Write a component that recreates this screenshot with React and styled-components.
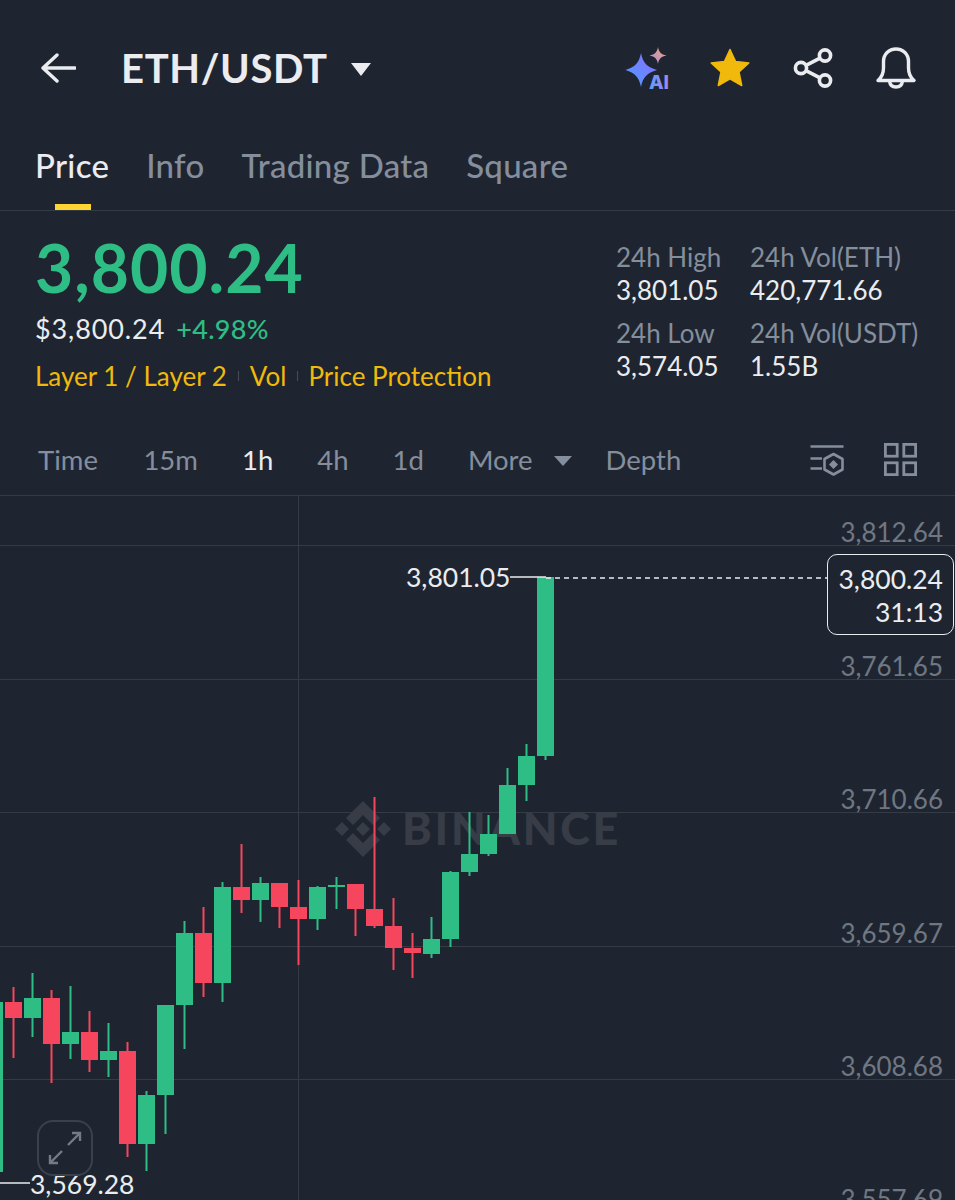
import React from "react";
import styled, { createGlobalStyle } from "styled-components";

const FONT = `Lato, "Open Sans", "Liberation Sans", sans-serif`;

const GlobalStyle = createGlobalStyle`
  html, body {
    margin: 0;
    padding: 0;
    background: #1f2530;
  }
  * {
    box-sizing: border-box;
  }
`;

// page coords: [centre x, wick top, wick bottom, body top, body bottom, up?]
const CANDLES = [
  [-5.5, 1001, 1172, 1002, 1172, 1],
  [13.5, 987, 1058, 1002, 1018, 0],
  [32.5, 973, 1037, 998, 1018, 1],
  [51.5, 990, 1083, 998, 1044, 0],
  [70.5, 986, 1059, 1032, 1044, 1],
  [89.5, 1011, 1072, 1032, 1060, 0],
  [108.5, 1023, 1077, 1051, 1060, 1],
  [127.5, 1042, 1157, 1051, 1144, 0],
  [146.5, 1091, 1171, 1095, 1144, 1],
  [165.5, 1005, 1134, 1005, 1095, 1],
  [184.5, 921, 1049, 933, 1005, 1],
  [203.5, 907, 997, 933, 983, 0],
  [222.5, 882, 1002, 887, 983, 1],
  [241.5, 844, 913, 887, 900, 0],
  [260.5, 877, 922, 883, 900, 1],
  [279.5, 883, 928, 883, 907, 0],
  [298.5, 880, 965, 907, 919, 0],
  [317.5, 886, 930, 887, 919, 1],
  [336.5, 877, 909, 885, 887, 1],
  [355.5, 884, 936, 884, 909, 0],
  [374.5, 797, 928, 909, 926, 0],
  [393.5, 898, 970, 926, 948, 0],
  [412.5, 933, 978, 948, 953, 0],
  [431.5, 917, 958, 939, 954, 1],
  [450.5, 871, 947, 872, 939, 1],
  [469.5, 812, 876, 854, 872, 1],
  [488.5, 815, 856, 834, 854, 1],
  [507.5, 768, 834, 785, 834, 1],
  [526.5, 744, 801, 756, 785, 1],
  [545.5, 577, 760, 577, 756, 1],
];

const GRID_Y = [545, 679, 812, 946, 1079];
const AXIS = [
  ["3,812.64", 532],
  ["3,761.65", 666],
  ["3,710.66", 799],
  ["3,659.67", 933],
  ["3,608.68", 1066],
  ["3,557.69", 1199],
];
const CHART_TOP = 496;

const Page = styled.div`
  width: 955px;
  height: 1200px;
  overflow: hidden;
  display: flex;
  flex-direction: column;
  background: #1f2530;
  color: #eaecef;
  font-family: ${FONT};
`;

const TopBar = styled.header`
  height: 136px;
  flex: none;
  display: flex;
  align-items: center;
  padding: 0 39px 0 40px;
`;

const IconSlot = styled.span`
  display: flex;
  flex: none;
`;

const Pair = styled.h1`
  margin: 0 0 0 45px;
  font-size: 40px;
  font-weight: 700;
  line-height: 1;
  letter-spacing: 0.65px;
  color: #eaecef;
`;

const PairCaret = styled.span`
  margin-left: 23px;
  margin-top: 2px;
  width: 0;
  height: 0;
  border-left: 10.5px solid transparent;
  border-right: 10.5px solid transparent;
  border-top: 13px solid #eaecef;
`;

const TopActions = styled.div`
  margin-left: auto;
  display: flex;
  align-items: center;
  gap: 43px;
`;

const AiSlot = styled.span`
  display: flex;
  margin-right: -6px;
`;

const Tabs = styled.nav`
  height: 75px;
  flex: none;
  display: flex;
  gap: 37px;
  padding: 0 35px;
  border-bottom: 1px solid #353b45;
`;

const Tab = styled.div`
  position: relative;
  height: 58px;
  font-size: 33px;
  line-height: 58px;
  font-weight: 500;
  letter-spacing: 0.28px;
  color: ${(p) => (p.$active ? "#eaecef" : "#848e9c")};

  ${(p) =>
    p.$active &&
    `&::after {
      content: "";
      position: absolute;
      left: 20px;
      top: 68px;
      width: 36px;
      height: 6px;
      background: #fcd535;
    }`}
`;

const Summary = styled.section`
  height: 209px;
  flex: none;
  display: flex;
  justify-content: space-between;
  padding: 0 36px 0 35px;
`;

const PriceBlock = styled.div`
  display: flex;
  flex-direction: column;
`;

const LastPrice = styled.div`
  margin-top: 20px;
  font-size: 66px;
  line-height: 74px;
  font-weight: 700;
  letter-spacing: 1px;
  color: #2ebd85;
`;

const FiatRow = styled.div`
  margin-top: 7px;
  display: flex;
  gap: 11px;
  font-size: 27px;
  line-height: 34px;
  letter-spacing: 0.9px;
`;

const Change = styled.span`
  color: #2ebd85;
  font-weight: 500;
  letter-spacing: 0.3px;
`;

const TagRow = styled.div`
  margin-top: 13px;
  display: flex;
  align-items: center;
  font-size: 26px;
  line-height: 34px;
  color: #f0b90b;
`;

const TagSep = styled.span`
  width: 1px;
  height: 10px;
  margin: 0 ${(p) => p.$space ?? 11}px;
  background: #474d57;
`;

const StatsGrid = styled.div`
  margin-top: 30px;
  display: grid;
  grid-template-columns: 103px 169px;
  column-gap: 31px;
  row-gap: 10px;
  align-content: start;
`;

const Stat = styled.div`
  display: flex;
  flex-direction: column;
`;

const StatLabel = styled.span`
  font-size: 26px;
  line-height: 33px;
  white-space: nowrap;
  color: #848e9c;
`;

const StatValue = styled.span`
  font-size: 26px;
  line-height: 33px;
  color: #eaecef;
`;

const Intervals = styled.div`
  height: 76px;
  flex: none;
  display: flex;
  align-items: center;
  padding: 4px 38px 0 38px;
  border-bottom: 1px solid #353b45;
  font-size: 27.5px;
`;

const Interval = styled.span`
  margin-right: ${(p) => p.$gap ?? 44}px;
  color: ${(p) => (p.$active ? "#eaecef" : "#848e9c")};
`;

const MoreCaret = styled.span`
  margin: 2px 34px 0 -23px;
  width: 0;
  height: 0;
  border-left: 9px solid transparent;
  border-right: 9px solid transparent;
  border-top: 10px solid #848e9c;
`;

const ChartTools = styled.div`
  margin-left: auto;
  display: flex;
  align-items: center;
  gap: 40px;
`;

const Chart = styled.div`
  position: relative;
  flex: 1;
  overflow: hidden;
`;

const ChartSvg = styled.svg`
  display: block;
`;

const AxisLabel = styled.span`
  position: absolute;
  right: 12px;
  top: ${(p) => p.$y - CHART_TOP - 17}px;
  font-size: 26px;
  line-height: 34px;
  color: #6f7782;
`;

const PriceNote = styled.span`
  position: absolute;
  left: ${(p) => p.$x}px;
  top: ${(p) => p.$y - CHART_TOP - 17}px;
  font-size: 26.5px;
  line-height: 34px;
  color: #eaecef;
`;

const PriceTag = styled.div`
  position: absolute;
  left: 827px;
  top: 58px;
  width: 127px;
  height: 81px;
  padding: 8px 10px 0 0;
  border: 1.5px solid #eaecef;
  border-radius: 10px;
  background: #1f2530;
  text-align: right;
  font-size: 26.5px;
  line-height: 33px;
  color: #eaecef;
`;

const ExpandButton = styled.div`
  position: absolute;
  left: 37px;
  top: 624px;
  width: 56px;
  height: 56px;
  display: flex;
  align-items: center;
  justify-content: center;
  border: 2px solid #3b414b;
  border-radius: 16px;
`;

const BackIcon = () => (
  <svg width="36" height="30" viewBox="0 0 36 30" fill="none" stroke="#eaecef" strokeWidth="3.4" strokeLinecap="round" strokeLinejoin="round">
    <path d="M35 15H3M17 2L3 15L17 28" />
  </svg>
);

const AiIcon = () => (
  <svg width="48" height="50" viewBox="0 -2 48 50">
    <defs>
      <linearGradient id="aiBig" x1="0" y1="1" x2="1" y2="0">
        <stop offset="0" stopColor="#4c9dff" />
        <stop offset="1" stopColor="#8c6cff" />
      </linearGradient>
      <linearGradient id="aiSmall" x1="0" y1="1" x2="1" y2="0">
        <stop offset="0" stopColor="#a48bea" />
        <stop offset="1" stopColor="#f8a36d" />
      </linearGradient>
      <linearGradient id="aiText" x1="0" y1="0" x2="1" y2="0">
        <stop offset="0" stopColor="#5f9dfa" />
        <stop offset="1" stopColor="#a286f2" />
      </linearGradient>
    </defs>
    <path d="M16 8C18 18 22 22 32 25C22 28 18 32 16 42C14 32 10 28 0.5 25C10 22 14 18 16 8Z" fill="url(#aiBig)" />
    <path d="M33 2C33.8 7 36 9.5 41.5 10.5C36 11.5 33.8 14 33 19C32.2 14 30 11.5 24.5 10.5C30 9.5 32.2 7 33 2Z" fill="url(#aiSmall)" />
    <text x="24" y="44" fontFamily="Inter, sans-serif" fontSize="19" fontWeight="800" fill="url(#aiText)">AI</text>
  </svg>
);

const StarIcon = () => (
  <svg width="40" height="40" viewBox="0 0 40 40">
    <path
      d="M20 1.5L25.6 13.5L38.8 15L29 24L31.7 37.5L20 30.8L8.3 37.5L11 24L1.2 15L14.4 13.5Z"
      fill="#f0b90b"
      stroke="#f0b90b"
      strokeWidth="1.5"
      strokeLinejoin="round"
    />
  </svg>
);

const ShareIcon = () => (
  <svg width="40" height="40" viewBox="0 0 40 40" fill="none" stroke="#eaecef" strokeWidth="3.6">
    <circle cx="8" cy="20" r="5.6" />
    <circle cx="32" cy="7.5" r="5.6" />
    <circle cx="32" cy="32.5" r="5.6" />
    <path d="M13 17.4L27 10.1M13 22.6L27 29.9" />
  </svg>
);

const BellIcon = () => (
  <svg width="40" height="42" viewBox="0 0 40 42" fill="none" stroke="#eaecef" strokeWidth="3.4" strokeLinejoin="round" strokeLinecap="round">
    <path d="M2 33.5C6 30 7.5 26.5 7.5 21V14.5C7.5 7 13 2 20 2C27 2 32.5 7 32.5 14.5V21C32.5 26.5 34 30 38 33.5Z" />
    <path d="M13.5 34C14 38 16.5 40 20 40C23.5 40 26 38 26.5 34" />
  </svg>
);

const FilterIcon = () => (
  <svg width="34" height="34" viewBox="0 -1.5 34 34" fill="none" stroke="#848e9c" strokeWidth="2.6">
    <path d="M0.5 2H33.5M0.5 14H12M0.5 24H12" />
    <path d="M23.5 9.5L32.5 14.5V25L23.5 30L14.5 25V14.5Z" strokeLinejoin="round" />
    <path d="M23.5 15.5L28 20L23.5 24.5L19 20Z" fill="#848e9c" stroke="none" />
  </svg>
);

const GridIcon = () => (
  <svg width="33" height="33" viewBox="0 0 33 33" fill="none" stroke="#848e9c" strokeWidth="2.8">
    <rect x="1.4" y="1.4" width="11.8" height="11.8" />
    <rect x="19.8" y="1.4" width="11.8" height="11.8" />
    <rect x="1.4" y="19.8" width="11.8" height="11.8" />
    <rect x="19.8" y="19.8" width="11.8" height="11.8" />
  </svg>
);

const ExpandIcon = () => (
  <svg width="34" height="34" viewBox="0 0 34 34" fill="none" stroke="#737b87" strokeWidth="2.4">
    <path d="M20 14L32 2M24 2H32V10M14 20L2 32M10 32H2V24" />
  </svg>
);

const BinanceMark = ({ x, y }) => (
  <g transform={`translate(${x} ${y})`} fill="#373c46">
    <path d="M0 -28L17 -11L10 -4L0 -14L-10 -4L-17 -11Z" />
    <path d="M0 28L17 11L10 4L0 14L-10 4L-17 11Z" />
    <path d="M0 -7L7 0L0 7L-7 0Z" />
    <path d="M-21 -7L-14 0L-21 7L-28 0Z" />
    <path d="M21 -7L28 0L21 7L14 0Z" />
  </g>
);

const CandleChart = () => (
  <ChartSvg width="955" height="704" viewBox={`0 ${CHART_TOP} 955 704`}>
    {GRID_Y.map((y) => (
      <line key={y} x1="0" x2="955" y1={y + 0.5} y2={y + 0.5} stroke="#353b45" strokeWidth="1" />
    ))}
    <line x1="298.5" x2="298.5" y1={CHART_TOP} y2="1200" stroke="#353b45" strokeWidth="1" />
    <BinanceMark x={363} y={829} />
    <text x="402" y="845" fontFamily={FONT} fontSize="45" fontWeight="900" letterSpacing="2.7" fill="#373c46">
      BINANCE
    </text>
    {CANDLES.map(([x, wickTop, wickBottom, top, bottom, up]) => {
      const color = up ? "#2ebd85" : "#f6465d";
      return (
        <g key={x} fill={color}>
          <rect x={x - 1} y={wickTop} width="2" height={wickBottom - wickTop} />
          <rect x={x - 8.5} y={top} width="17" height={bottom - top} />
        </g>
      );
    })}
    <line x1="510" x2="546" y1="577" y2="577" stroke="#eaecef" strokeWidth="1.5" />
    <line x1="546" x2="827" y1="578" y2="578" stroke="#eaecef" strokeWidth="1.5" strokeDasharray="5 4" />
    <line x1="0" x2="30" y1="1183" y2="1183" stroke="#eaecef" strokeWidth="1.5" />
  </ChartSvg>
);

export default function App() {
  return (
    <>
      <GlobalStyle />
      <Page>
        <TopBar>
          <IconSlot>
            <BackIcon />
          </IconSlot>
          <Pair>ETH/USDT</Pair>
          <PairCaret />
          <TopActions>
            <AiSlot>
              <AiIcon />
            </AiSlot>
            <StarIcon />
            <ShareIcon />
            <BellIcon />
          </TopActions>
        </TopBar>

        <Tabs>
          <Tab $active>Price</Tab>
          <Tab>Info</Tab>
          <Tab>Trading Data</Tab>
          <Tab>Square</Tab>
        </Tabs>

        <Summary>
          <PriceBlock>
            <LastPrice>3,800.24</LastPrice>
            <FiatRow>
              <span>$3,800.24</span>
              <Change>+4.98%</Change>
            </FiatRow>
            <TagRow>
              <span>Layer 1 / Layer 2</span>
              <TagSep />
              <span>Vol</span>
              <TagSep $space={10.5} />
              <span>Price Protection</span>
            </TagRow>
          </PriceBlock>
          <StatsGrid>
            <Stat>
              <StatLabel>24h High</StatLabel>
              <StatValue>3,801.05</StatValue>
            </Stat>
            <Stat>
              <StatLabel>24h Vol(ETH)</StatLabel>
              <StatValue>420,771.66</StatValue>
            </Stat>
            <Stat>
              <StatLabel>24h Low</StatLabel>
              <StatValue>3,574.05</StatValue>
            </Stat>
            <Stat>
              <StatLabel>24h Vol(USDT)</StatLabel>
              <StatValue>1.55B</StatValue>
            </Stat>
          </StatsGrid>
        </Summary>

        <Intervals>
          <Interval $gap={45.5}>Time</Interval>
          <Interval>15m</Interval>
          <Interval $active>1h</Interval>
          <Interval>4h</Interval>
          <Interval>1d</Interval>
          <Interval>More</Interval>
          <MoreCaret />
          <Interval $gap={0}>Depth</Interval>
          <ChartTools>
            <FilterIcon />
            <GridIcon />
          </ChartTools>
        </Intervals>

        <Chart>
          <CandleChart />
          {AXIS.map(([label, y]) => (
            <AxisLabel key={label} $y={y}>
              {label}
            </AxisLabel>
          ))}
          <PriceNote $x={406} $y={577}>
            3,801.05
          </PriceNote>
          <PriceNote $x={30} $y={1184}>
            3,569.28
          </PriceNote>
          <PriceTag>
            3,800.24
            <br />
            31:13
          </PriceTag>
          <ExpandButton>
            <ExpandIcon />
          </ExpandButton>
        </Chart>
      </Page>
    </>
  );
}
